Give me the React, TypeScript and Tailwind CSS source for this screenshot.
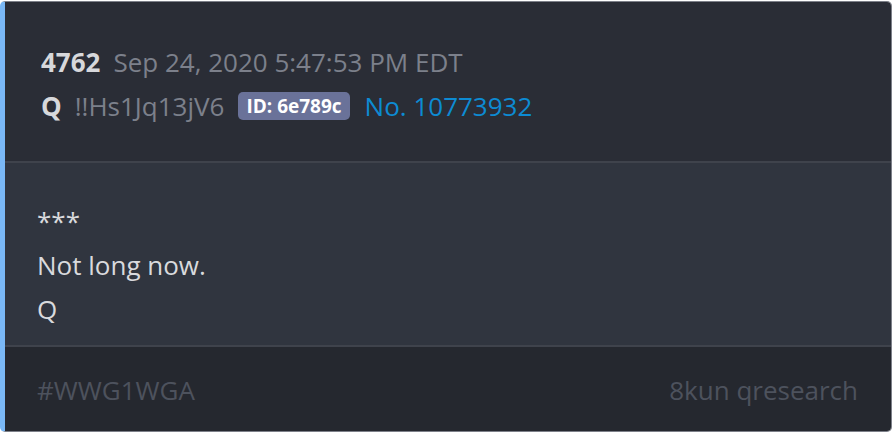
export default function App() {
  return (
    <div className="min-h-screen bg-white pt-px" style={{ fontFamily: '"Open Sans", sans-serif' }}>
      <div className="w-[892px] h-[431px] flex flex-col overflow-hidden rounded-[5px] border border-[#7d8089] border-l-[5px] border-l-[#7ab8f6]">
        <header className="bg-[#2a2d36] pl-[36px] pt-[38px] pb-[33px] text-[26px] leading-[44px]">
          <div className="flex items-center">
            <span className="font-bold text-[#d7d8db]">4762</span>
            <span className="ml-[13px] text-[#7c808b]">Sep 24, 2020 5:47:53 PM EDT</span>
          </div>
          <div className="flex items-center">
            <span className="font-bold text-[#d7d8db]">Q</span>
            <span className="ml-[13px] text-[#7c808b]">!!Hs1Jq13jV6</span>
            <span className="ml-[14px] rounded-[5px] bg-[#6a7299] px-[8px] text-[19px] leading-[28px] font-bold text-white">
              ID: 6e789c
            </span>
            <span className="ml-[15px] text-[#0d8bd3]">No. 10773932</span>
          </div>
        </header>
        <div className="h-[2px] bg-[#3f434c]" />
        <main className="bg-[#30353f] pl-[32px] pt-[36px] pb-[14px] text-[26px] leading-[44px] text-[#d9dadd]">
          <p>***</p>
          <p>Not long now.</p>
          <p>Q</p>
        </main>
        <div className="h-[2px] bg-[#3f434c]" />
        <footer className="flex-1 bg-[#25282f] pl-[32px] pr-[33px] pt-[21px] flex justify-between text-[26px] leading-[44px] text-[#4d525d]">
          <span>#WWG1WGA</span>
          <span>8kun qresearch</span>
        </footer>
      </div>
    </div>
  );
}
